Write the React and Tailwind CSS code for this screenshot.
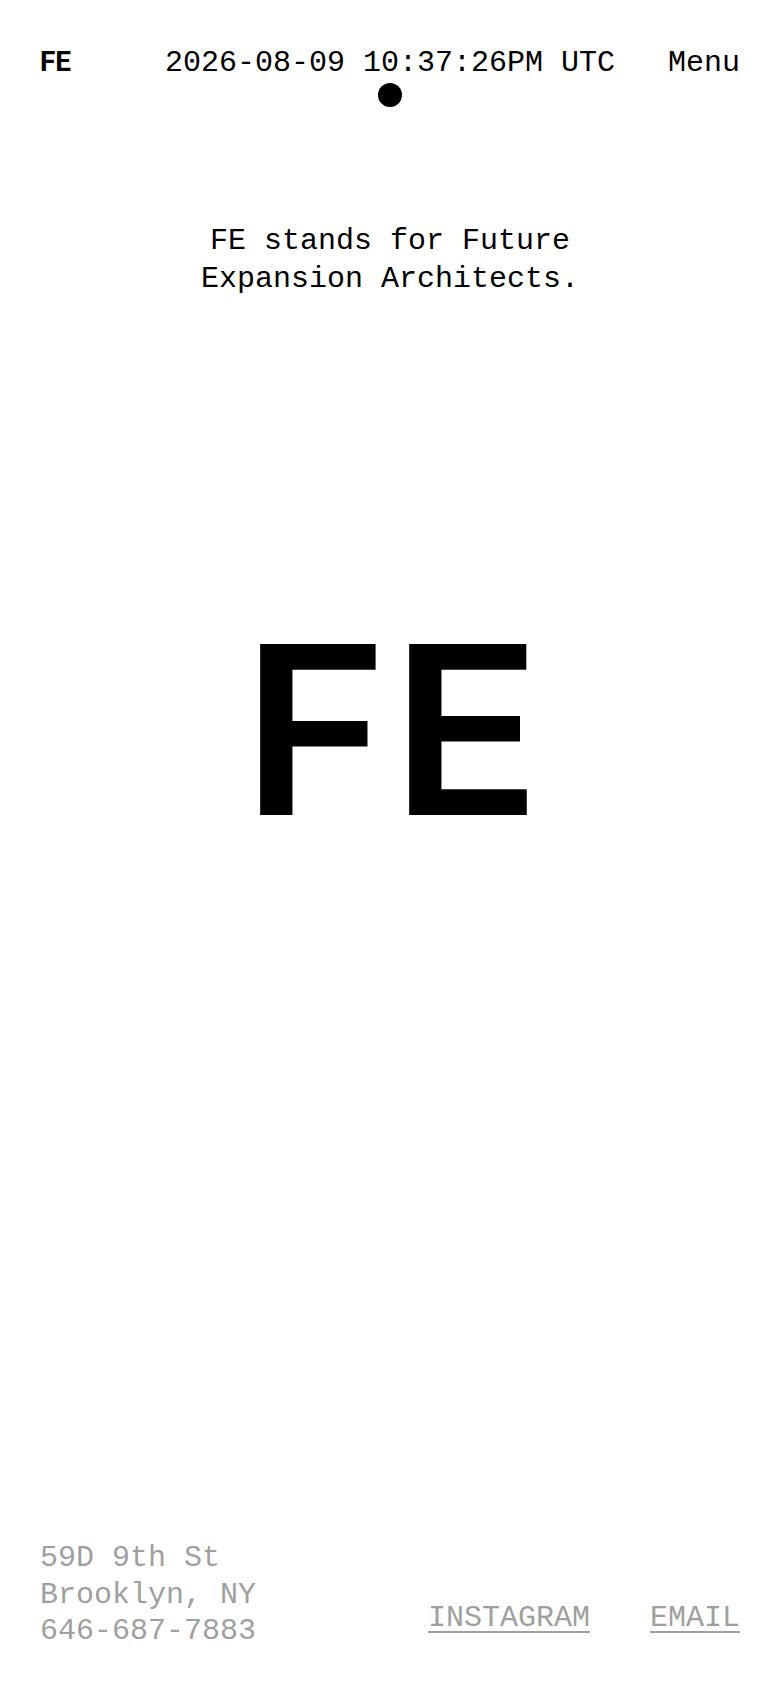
import React from 'react';

const mono = "font-['Liberation_Mono','DejaVu_Sans_Mono',monospace]";

export default function App() {
    return (
        <div className="min-h-[1688px] flex flex-col bg-white text-black px-10">
            {/* Header */}
            <header className={`pt-[43px] grid grid-cols-[1fr_auto_1fr] items-baseline ${mono} text-[30px] leading-[37px]`}>
                <div className="font-['Roboto','Liberation_Sans',sans-serif] font-bold text-[28px]">FE</div>
                <div className="flex flex-col items-center">
                    <span>2026-08-09 10:37:26PM UTC</span>
                    <span className="mt-[1px] w-6 h-6 rounded-full bg-black"></span>
                </div>
                <div className="justify-self-end">Menu</div>
            </header>

            {/* Tagline */}
            <p className={`mt-[115px] mx-auto w-[420px] text-center ${mono} text-[30px] leading-[38.3px]`}>
                FE stands for Future Expansion Architects.
            </p>

            {/* Big mark */}
            <div className="mt-[313px] pl-[7px] text-center font-['Inter','Roboto',sans-serif] font-semibold text-[235px] leading-none tracking-[3px]">
                <span className="inline-block scale-x-[1.055]">FE</span>
            </div>

            <div className="flex-1"></div>

            {/* Footer */}
            <footer className={`pb-[38px] flex justify-between items-end ${mono} text-[30px] leading-[36.7px] text-[#9f9f9f]`}>
                <div>
                    <div>59D 9th St</div>
                    <div>Brooklyn, NY</div>
                    <div>646-687-7883</div>
                </div>
                <div className="mb-[13px] flex gap-[60px]">
                    <a className="underline decoration-2 underline-offset-[5px]">INSTAGRAM</a>
                    <a className="underline decoration-2 underline-offset-[5px]">EMAIL</a>
                </div>
            </footer>
        </div>
    );
}
